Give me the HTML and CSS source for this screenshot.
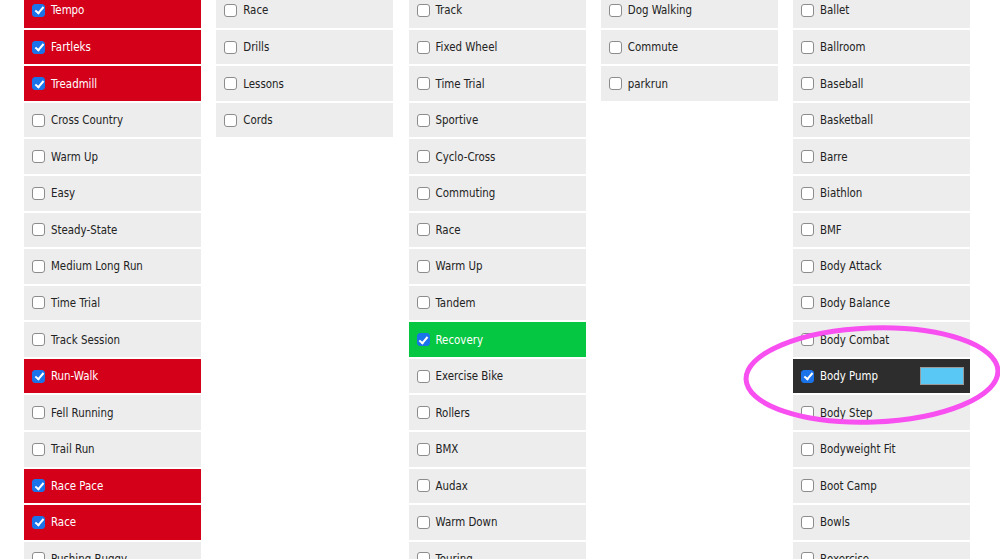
FILE: index.html
```html
<!DOCTYPE html>
<html>
<head>
<meta charset="utf-8">
<link rel="stylesheet" href="styles.css">
</head>
<body>
<div class="board">
  <div class="col">
    <label class="item red"><span class="cb on"></span>Tempo</label>
    <label class="item red"><span class="cb on"></span>Fartleks</label>
    <label class="item red"><span class="cb on"></span>Treadmill</label>
    <label class="item"><span class="cb"></span>Cross Country</label>
    <label class="item"><span class="cb"></span>Warm Up</label>
    <label class="item"><span class="cb"></span>Easy</label>
    <label class="item"><span class="cb"></span>Steady-State</label>
    <label class="item"><span class="cb"></span>Medium Long Run</label>
    <label class="item"><span class="cb"></span>Time Trial</label>
    <label class="item"><span class="cb"></span>Track Session</label>
    <label class="item red"><span class="cb on"></span>Run-Walk</label>
    <label class="item"><span class="cb"></span>Fell Running</label>
    <label class="item"><span class="cb"></span>Trail Run</label>
    <label class="item red"><span class="cb on"></span>Race Pace</label>
    <label class="item red"><span class="cb on"></span>Race</label>
    <label class="item"><span class="cb"></span>Pushing Buggy</label>
  </div>
  <div class="col">
    <label class="item"><span class="cb"></span>Race</label>
    <label class="item"><span class="cb"></span>Drills</label>
    <label class="item"><span class="cb"></span>Lessons</label>
    <label class="item"><span class="cb"></span>Cords</label>
  </div>
  <div class="col">
    <label class="item"><span class="cb"></span>Track</label>
    <label class="item"><span class="cb"></span>Fixed Wheel</label>
    <label class="item"><span class="cb"></span>Time Trial</label>
    <label class="item"><span class="cb"></span>Sportive</label>
    <label class="item"><span class="cb"></span>Cyclo-Cross</label>
    <label class="item"><span class="cb"></span>Commuting</label>
    <label class="item"><span class="cb"></span>Race</label>
    <label class="item"><span class="cb"></span>Warm Up</label>
    <label class="item"><span class="cb"></span>Tandem</label>
    <label class="item green"><span class="cb on"></span>Recovery</label>
    <label class="item"><span class="cb"></span>Exercise Bike</label>
    <label class="item"><span class="cb"></span>Rollers</label>
    <label class="item"><span class="cb"></span>BMX</label>
    <label class="item"><span class="cb"></span>Audax</label>
    <label class="item"><span class="cb"></span>Warm Down</label>
    <label class="item"><span class="cb"></span>Touring</label>
  </div>
  <div class="col">
    <label class="item"><span class="cb"></span>Dog Walking</label>
    <label class="item"><span class="cb"></span>Commute</label>
    <label class="item"><span class="cb"></span>parkrun</label>
  </div>
  <div class="col">
    <label class="item"><span class="cb"></span>Ballet</label>
    <label class="item"><span class="cb"></span>Ballroom</label>
    <label class="item"><span class="cb"></span>Baseball</label>
    <label class="item"><span class="cb"></span>Basketball</label>
    <label class="item"><span class="cb"></span>Barre</label>
    <label class="item"><span class="cb"></span>Biathlon</label>
    <label class="item"><span class="cb"></span>BMF</label>
    <label class="item"><span class="cb"></span>Body Attack</label>
    <label class="item"><span class="cb"></span>Body Balance</label>
    <label class="item"><span class="cb"></span>Body Combat</label>
    <label class="item dark"><span class="cb on"></span>Body Pump<span class="swatch"></span></label>
    <label class="item"><span class="cb"></span>Body Step</label>
    <label class="item"><span class="cb"></span>Bodyweight Fit</label>
    <label class="item"><span class="cb"></span>Boot Camp</label>
    <label class="item"><span class="cb"></span>Bowls</label>
    <label class="item"><span class="cb"></span>Boxercise</label>
  </div>
</div>
<svg class="ring" width="1000" height="559" viewBox="0 0 1000 559">
  <ellipse cx="872" cy="375" rx="126" ry="47" transform="rotate(-2 872 375)" fill="none" stroke="#f84ff0" stroke-width="5"/>
</svg>
</body>
</html>
```
FILE: styles.css
```css
html, body {
  margin: 0;
  padding: 0;
  background: #ffffff;
  overflow: hidden;
}
body {
  width: 1000px;
  height: 559px;
  position: relative;
  font-family: "DejaVu Sans Condensed", "DejaVu Sans", sans-serif;
  font-size: 11.4px;
  color: #222222;
}
.board {
  display: grid;
  grid-template-columns: repeat(5, 177px);
  column-gap: 15.25px;
  padding-left: 24px;
  margin-top: -6.8px;
  align-items: start;
}
.col {
  display: flex;
  flex-direction: column;
  gap: 2px;
}
.item {
  height: 34.57px;
  box-sizing: border-box;
  display: flex;
  align-items: center;
  padding-left: 8px;
  background: #ededed;
  white-space: nowrap;
}
.item.red { background: #d4001a; color: #ffffff; }
.item.green { background: #06c741; color: #ffffff; }
.item.dark { background: #2d2d2d; color: #ffffff; }
.cb {
  width: 13px;
  height: 13px;
  box-sizing: border-box;
  border: 1px solid #8c8c8c;
  border-radius: 3px;
  background: #ffffff;
  margin-right: 6px;
  flex: none;
  position: relative;
}
.cb.on {
  background: #1a73e8;
  border-color: #1a73e8;
}
.cb.on::after {
  content: "";
  position: absolute;
  left: 3.5px;
  top: 0.5px;
  width: 3px;
  height: 7px;
  border: solid #ffffff;
  border-width: 0 2px 2px 0;
  transform: rotate(40deg);
}
.swatch {
  margin-left: auto;
  margin-right: 6px;
  width: 44px;
  height: 18px;
  box-sizing: border-box;
  background: #5ac8f5;
  border: 1px solid #9a9a9a;
}
.ring {
  position: absolute;
  left: 0;
  top: 0;
  pointer-events: none;
}
```
